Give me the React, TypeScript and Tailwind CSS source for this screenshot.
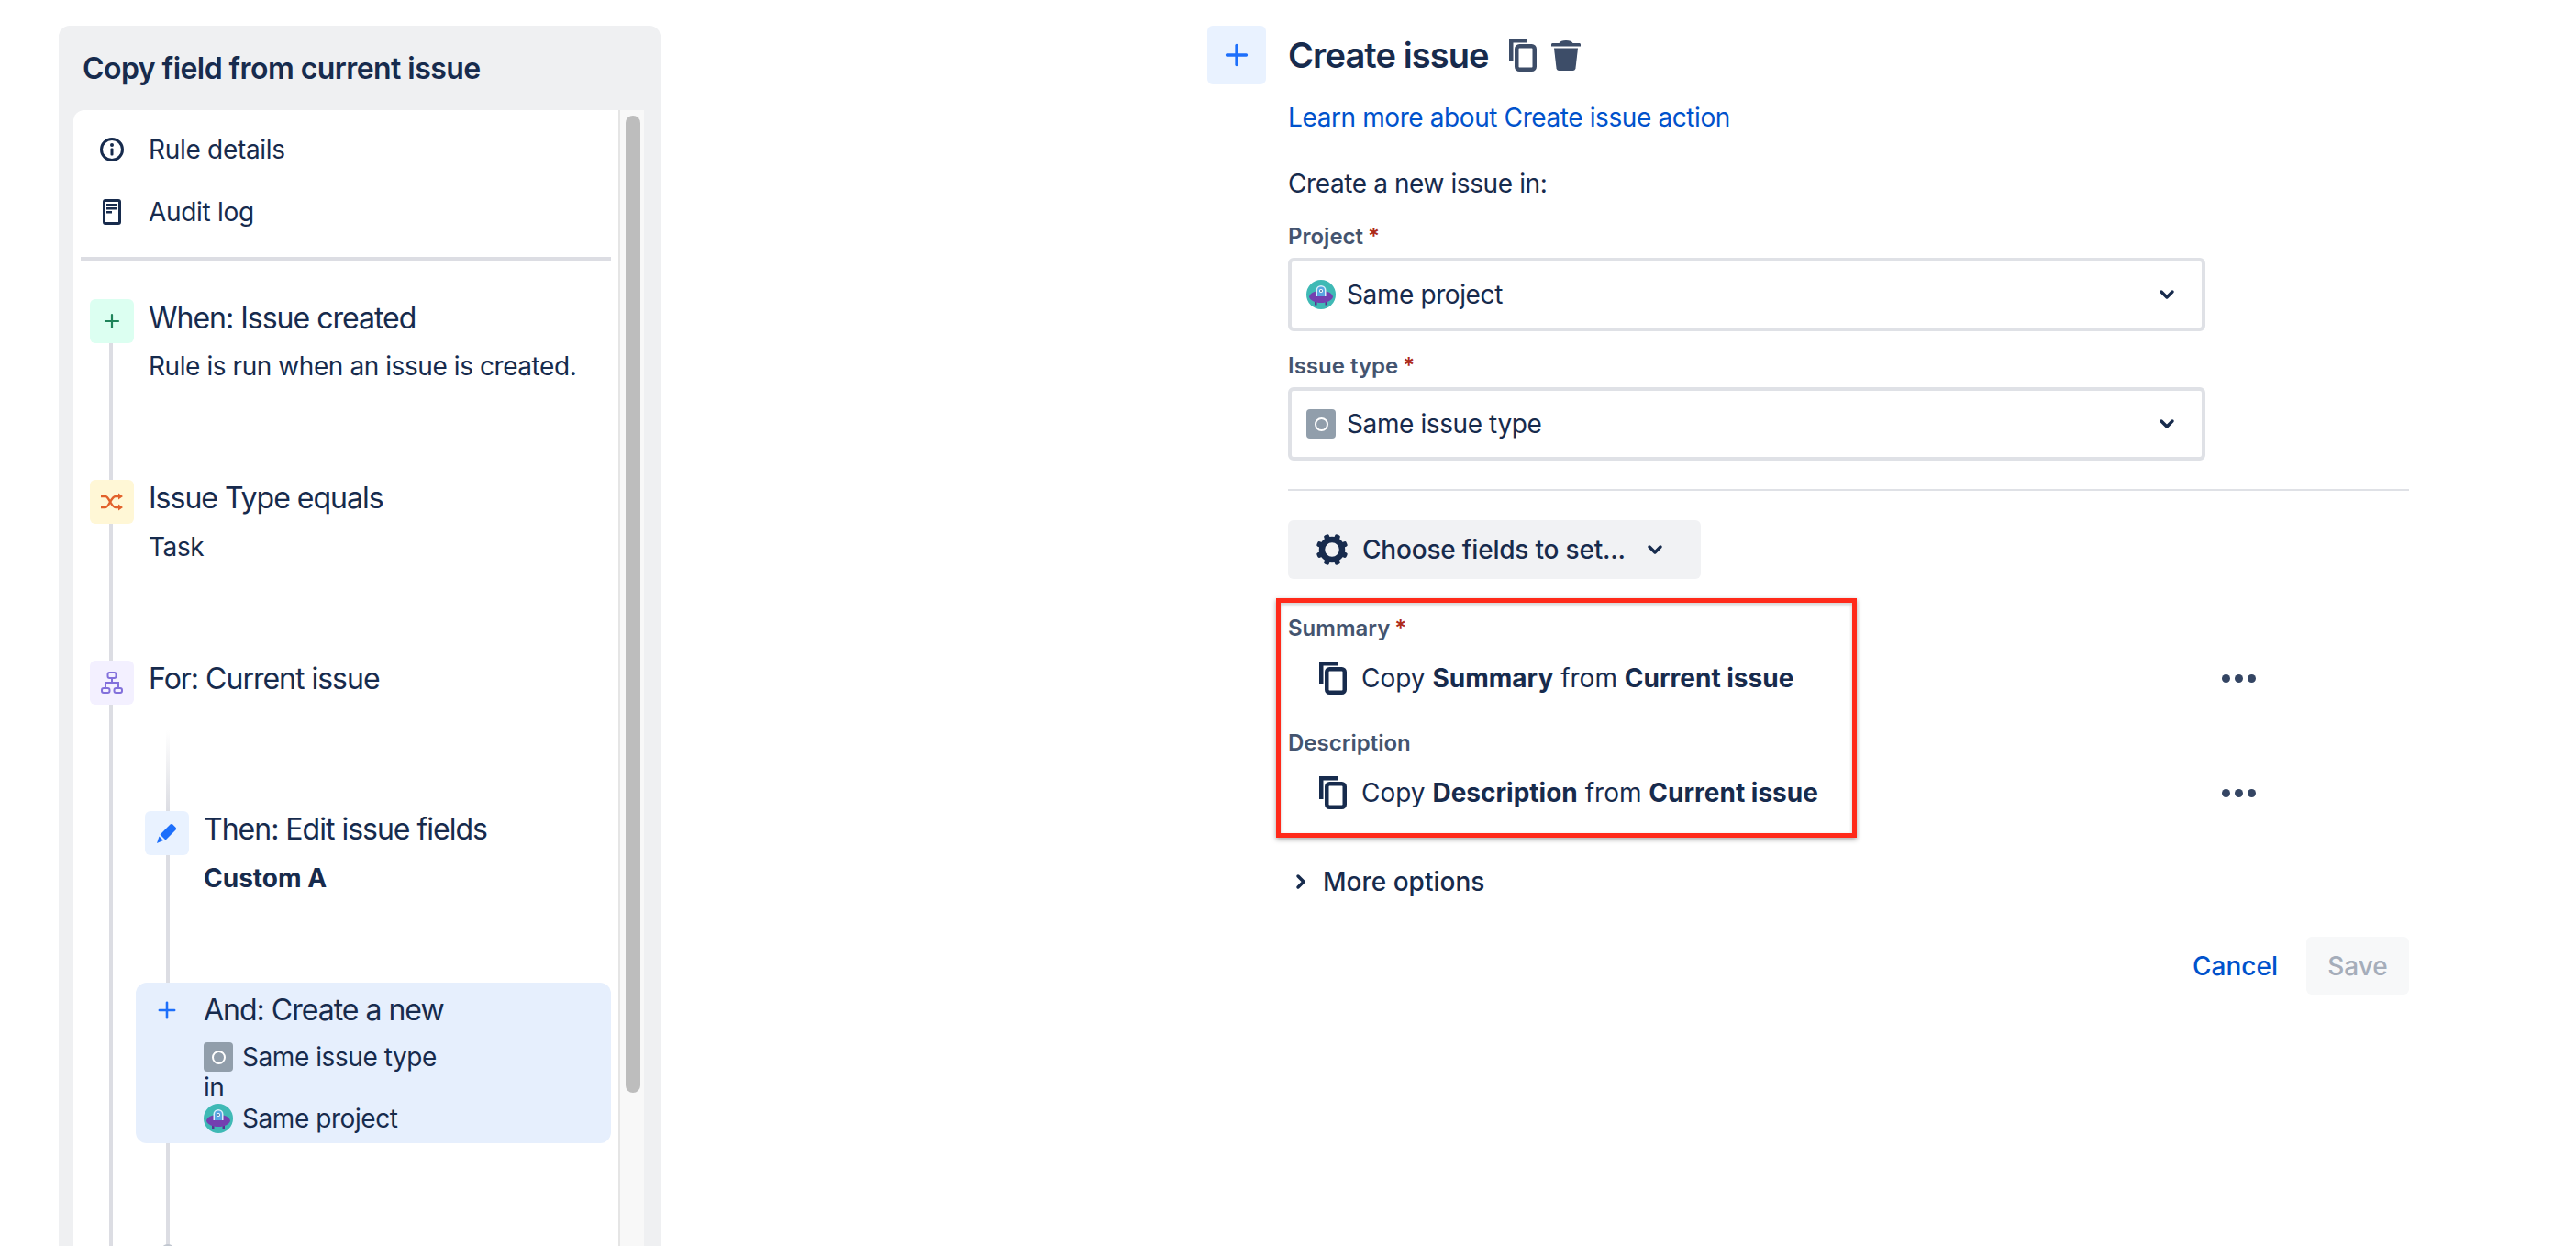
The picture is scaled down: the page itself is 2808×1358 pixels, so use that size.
import React from 'react';
import { ChevronDown, ChevronRight, Plus } from 'lucide-react';

const font = "font-['Inter','Liberation_Sans',sans-serif]";

function CopyIcon({ className }: { className: string }) {
  return (
    <svg viewBox="0 0 30 36" className={className} fill="none" stroke="currentColor" strokeWidth="4.500">
      <path d="M2.250 25V2.250H20" />
      <rect x="8.250" y="8.250" width="19.500" height="25.500" rx="3" />
    </svg>
  );
}

function TrashIcon() {
  return (
    <svg viewBox="0 0 32 33" className="w-8 h-[33px] text-[#3d4d68]" fill="currentColor">
      <path d="M0 4.500C0 3.700.6 3 1.500 3h7C9.500 1 12 0 16 0s6.500 1 7.500 3h7c.9 0 1.500.7 1.500 1.500V6.500H0z" />
      <path d="M3 8.500h26l-2.500 21.700c-.2 1.600-1.300 2.800-3 2.800h-15c-1.700 0-2.800-1.200-3-2.800z" />
    </svg>
  );
}

function GearIcon() {
  return (
    <svg viewBox="0 0 36 36" className="w-9 h-9 text-[#172b4d] shrink-0" fill="currentColor">
      <circle cx="18" cy="18" r="11" fill="none" stroke="currentColor" strokeWidth="6.500" />
      {[22.5, 67.5, 112.5, 157.5, 202.5, 247.5, 292.5, 337.5].map((a) => (
        <rect key={a} x="15" y="0.500" width="6" height="6" rx="2" transform={`rotate(${a} 18 18)`} />
      ))}
    </svg>
  );
}

function ProjectAvatar({ className }: { className: string }) {
  return (
    <svg viewBox="0 0 32 32" className={className}>
      <circle cx="16" cy="16" r="16" fill="#3fb9b5" />
      <rect x="9" y="23" width="2.500" height="4.500" fill="#5a3390" />
      <rect x="20.500" y="23" width="2.500" height="4.500" fill="#5a3390" />
      <path d="M3 18.500C3.800 15 7 13 11 12.500h10c4 .5 7.200 2.500 8 6-1 4-6.500 6.500-13 6.500S4 22.500 3 18.500z" fill="#7440b0" />
      <path d="M10.500 18v-6.500a5.500 5.500 0 0 1 11 0V18z" fill="#dceefb" />
      <path d="M12 18v-6.500a4 4 0 0 1 8 0V18z" fill="#58a6e2" />
      <circle cx="16" cy="12" r="2" fill="#fff" />
      <circle cx="16" cy="12" r="0.900" fill="#24588f" />
    </svg>
  );
}

function IssueTypeIcon({ className }: { className: string }) {
  return (
    <div className={`rounded-[4px] bg-[#919eab] flex items-center justify-center shrink-0 ${className}`}>
      <div className="w-[15px] h-[15px] rounded-full border-2 border-white" />
    </div>
  );
}

function StepIcon({ bg, children }: { bg: string; children: React.ReactNode }) {
  return <div className={`w-12 h-12 rounded-md flex items-center justify-center shrink-0 ${bg}`}>{children}</div>;
}

function Field({ label, icon, value }: { label: string; icon: React.ReactNode; value: string }) {
  return (
    <div>
      <div className="h-[32px] flex items-center text-[24px] font-semibold text-[#44546f] leading-none">
        {label}
        <span className="text-[#ae2a19] ml-[5px]">*</span>
      </div>
      <div className="mt-[7px] h-20 rounded-md border-4 border-[#dfe1e6] bg-white flex items-center pl-4 pr-[26px] w-[1000px]">
        {icon}
        <span className="ml-3 text-[28px] tracking-[-0.4px] text-[#172b4d]">{value}</span>
        <ChevronDown className="ml-auto w-6 h-6 text-[#172b4d]" strokeWidth={3.500} />
      </div>
    </div>
  );
}

function CopyRow({ label, required, field }: { label: string; required?: boolean; field: string }) {
  return (
    <div>
      <div className="h-[32px] flex items-center text-[24px] font-semibold text-[#44546f]">
        {label}
        {required && <span className="text-[#ae2a19] ml-[5px]">*</span>}
      </div>
      <div className="mt-[14px] h-[48px] flex items-center pl-[34px] w-[1055px]">
        <CopyIcon className="w-[30px] h-9 text-[#172b4d] shrink-0" />
        <span className="ml-4 text-[28px] text-[#172b4d]">
          Copy <b className="font-bold">{field}</b> from <b className="font-bold">Current issue</b>
        </span>
        <div className="ml-auto flex gap-[5px]">
          <span className="w-[9px] h-[9px] rounded-full bg-[#344563]" />
          <span className="w-[9px] h-[9px] rounded-full bg-[#344563]" />
          <span className="w-[9px] h-[9px] rounded-full bg-[#344563]" />
        </div>
      </div>
    </div>
  );
}

export default function App() {
  return (
    <div className={`h-screen overflow-hidden bg-white flex items-start ${font} text-[#172b4d]`}>
      {/* Left panel */}
      <aside className="ml-16 mt-7 w-[656px] h-[1330px] bg-[#eff0f2] rounded-t-xl pl-4 pr-[18px] shrink-0">
        <h2 className="h-[92px] pt-7 pl-[10px] text-[32px] tracking-[-0.55px] leading-[38px] font-semibold">Copy field from current issue</h2>
        <div className="h-[1238px] flex bg-white rounded-tl-xl overflow-hidden">
          <div className="w-[594px] shrink-0">
            {/* Details links */}
            <div className="pt-[9px]">
              <div className="h-[68px] flex items-center pl-[26px] text-[28px] tracking-[-0.3px]">
                <svg viewBox="0 0 32 32" className="w-8 h-8" fill="none">
                  <circle cx="16" cy="16" r="11.500" stroke="#172b4d" strokeWidth="3" />
                  <circle cx="16" cy="11" r="2" fill="#172b4d" />
                  <rect x="14.500" y="14.500" width="3" height="8" rx="1" fill="#172b4d" />
                </svg>
                <span className="ml-6">Rule details</span>
              </div>
              <div className="h-[68px] flex items-center pl-[26px] text-[28px] tracking-[-0.3px]">
                <svg viewBox="0 0 32 32" className="w-8 h-8" fill="none">
                  <rect x="7.500" y="3.500" width="17" height="25" rx="1.500" stroke="#172b4d" strokeWidth="3" />
                  <rect x="10" y="7" width="12" height="2.500" fill="#172b4d" />
                  <rect x="10" y="11" width="12" height="2.500" fill="#172b4d" />
                  <rect x="10" y="15" width="6" height="2.500" fill="#172b4d" />
                </svg>
                <span className="ml-6">Audit log</span>
              </div>
            </div>
            <div className="mt-[15px] mx-2 h-1 bg-[#dcdde3]" />

            {/* Rule steps */}
            <div className="relative mt-[42px] pl-[18px]">
              <div className="absolute left-[39px] top-0 w-1 h-[1100px] bg-[#dcdde3]" />
              <div className="relative h-[197px] flex">
                <StepIcon bg="bg-[#dcfff1]">
                  <Plus className="w-6 h-6 text-[#1f845a]" strokeWidth={2.200} />
                </StepIcon>
                <div className="ml-4">
                  <div className="text-[32px] tracking-[-1px] leading-10 mt-px">When: Issue created</div>
                  <div className="text-[28px] tracking-[-0.43px] leading-10 mt-3">Rule is run when an issue is created.</div>
                </div>
              </div>
              <div className="relative h-[197px] flex">
                <StepIcon bg="bg-[#fff7d6]">
                  <svg viewBox="0 0 24 20" className="w-6 h-5" fill="none" stroke="#e2612b" strokeWidth="2.400">
                    <path d="M0 4h5c4 0 6 12 11 12h5M0 16h5c4 0 6-12 11-12h5" />
                    <path d="M19 .5 24 4l-5 3.500zM19 12.500l5 3.500-5 3.500z" fill="#e2612b" stroke="none" />
                  </svg>
                </StepIcon>
                <div className="ml-4">
                  <div className="text-[32px] tracking-[-1px] leading-10">Issue Type equals</div>
                  <div className="text-[28px] tracking-[-0.43px] leading-10 mt-[13px]">Task</div>
                </div>
              </div>
              <div className="relative h-[164px] flex">
                <StepIcon bg="bg-[#f3f0ff]">
                  <svg viewBox="0 0 24 24" className="w-6 h-6" fill="none" stroke="#8270db" strokeWidth="2">
                    <rect x="7.500" y="1" width="9" height="6" rx="2" />
                    <rect x="1" y="18" width="8.500" height="5" rx="2" />
                    <rect x="14.500" y="18" width="8.500" height="5" rx="2" />
                    <path d="M12 7v5M5 18v-6h14v6" />
                  </svg>
                </StepIcon>
                <div className="ml-4 text-[32px] tracking-[-1px] leading-10">For: Current issue</div>
              </div>

              {/* Nested steps */}
              <div className="relative pl-[50px]">
                <div className="absolute left-[83px] -top-[88px] w-1 h-[88px] bg-gradient-to-b from-white to-[#dcdde3]" />
                <div className="absolute left-[83px] top-0 w-1 h-[600px] bg-[#dcdde3]" />
                <div className="absolute left-[77px] top-[472px] w-4 h-4 rounded-full bg-[#c1c7d0]" />
                <div className="relative h-[187px] flex pl-[10px]">
                  <StepIcon bg="bg-[#e9f2ff]">
                    <svg viewBox="0 0 24 24" className="w-6 h-6" fill="#1d6ffb">
                      <path d="M4.500 13.500 15.500 2.500c.8-.8 2-.8 2.800 0l3.200 3.200c.8.800.8 2 0 2.800L10.500 19.500z" />
                      <path d="m3.500 15.500 4.500 4.500L1 23z" />
                    </svg>
                  </StepIcon>
                  <div className="ml-4">
                    <div className="text-[32px] tracking-[-1px] leading-10">Then: Edit issue fields</div>
                    <div className="text-[28px] leading-10 mt-[13px] font-bold">Custom A</div>
                  </div>
                </div>
                <div className="relative h-[175px] w-[518px] rounded-xl bg-[#e6effd] flex pl-[10px] pt-[10px]">
                  <div className="w-12 h-10 flex items-center justify-center shrink-0">
                    <Plus className="w-7 h-7 text-[#1d6ffb]" strokeWidth={2.200} />
                  </div>
                  <div className="ml-4">
                    <div className="text-[32px] tracking-[-1px] leading-10">And: Create a new</div>
                    <div className="mt-[13px] h-9 flex items-center text-[28px] tracking-[-0.43px]">
                      <IssueTypeIcon className="w-8 h-8" />
                      <span className="ml-[10px]">Same issue type</span>
                    </div>
                    <div className="text-[28px] tracking-[-0.43px] leading-[31px]">in</div>
                    <div className="h-9 flex items-center text-[28px] tracking-[-0.43px]">
                      <ProjectAvatar className="w-8 h-8" />
                      <span className="ml-[10px]">Same project</span>
                    </div>
                  </div>
                </div>
              </div>
            </div>
          </div>
          {/* Scrollbar */}
          <div className="w-[28px] border-l-2 border-[#e5e5e5] bg-[#f8f8f8] px-[6px] pt-[6px]">
            <div className="w-4 h-[1065px] rounded-full bg-[#bdbdbd]" />
          </div>
        </div>
      </aside>

      {/* Action config */}
      <main className="relative ml-[596px] mt-7 flex shrink-0">
        <div className="w-16 h-16 rounded-md bg-[#e9f2ff] flex items-center justify-center shrink-0">
          <Plus className="w-9 h-9 text-[#1d6ffb]" strokeWidth={2.200} />
        </div>
        <div className="ml-6 w-[1222px]">
          <div className="h-[64px] flex items-center">
            <h1 className="text-[38px] tracking-[-0.9px] font-semibold leading-none">Create issue</h1>
            <CopyIcon className="ml-[22px] w-[30px] h-9 text-[#3d4d68]" />
            <div className="ml-[16px]"><TrashIcon /></div>
          </div>
          <a className="block mt-[16px] text-[28px] tracking-[-0.4px] leading-10 text-[#0052cc]">Learn more about Create issue action</a>
          <p className="mt-8 text-[28px] tracking-[-0.4px] leading-10">Create a new issue in:</p>
          <div className="mt-[22px]">
            <Field label="Project" icon={<ProjectAvatar className="w-8 h-8 shrink-0" />} value="Same project" />
          </div>
          <div className="mt-[22px]">
            <Field label="Issue type" icon={<IssueTypeIcon className="w-8 h-8" />} value="Same issue type" />
          </div>
          <div className="mt-[31px] h-0.5 bg-[#dfe1e6]" />
          <button className="mt-8 h-16 w-[450px] rounded-md bg-[#f1f2f4] flex items-center pl-[30px] text-[28px] tracking-[-0.2px] font-medium">
            <GearIcon />
            <span className="ml-[15px]">Choose fields to set...</span>
            <ChevronDown className="ml-5 w-6 h-6" strokeWidth={3.500} />
          </button>
          <div className="mt-[38px]">
            <CopyRow label="Summary" required field="Summary" />
          </div>
          <div className="mt-[31px]">
            <CopyRow label="Description" field="Description" />
          </div>
          <div className="mt-[53px] h-10 flex items-center text-[28px] font-medium">
            <ChevronRight className="w-6 h-6 ml-0.5" strokeWidth={3.500} />
            <span className="ml-[12px]">More options</span>
          </div>
          <div className="mt-[40px] flex justify-end items-center">
            <a className="text-[28px] font-medium text-[#0052cc]">Cancel</a>
            <button className="ml-[31px] w-[112px] h-[63px] rounded-md bg-[#f7f8f9] text-[28px] font-medium text-[#a5adba]">Save</button>
          </div>
        </div>

        {/* Red annotation around the copied fields */}
        <div className="absolute left-[75px] top-[624px] w-[633px] h-[261px] border-[5px] border-[#ff2a1a] shadow-[0_2px_5px_rgba(0,0,0,0.35),inset_0_2px_4px_rgba(0,0,0,0.2)]" />
      </main>
    </div>
  );
}
